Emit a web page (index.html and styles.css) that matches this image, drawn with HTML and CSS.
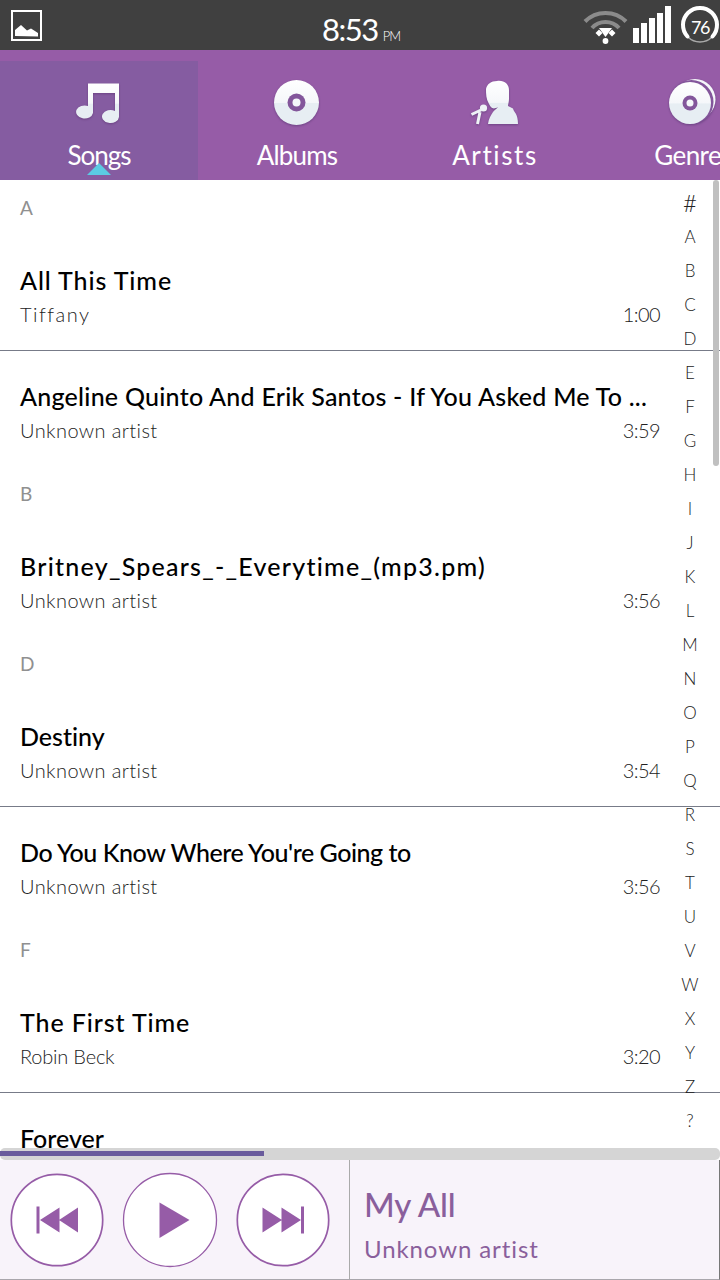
FILE: index.html
```html
<!DOCTYPE html>
<html lang="en">
<head>
<meta charset="utf-8">
<title>Music</title>
<link rel="stylesheet" href="styles.css">
</head>
<body>
<div class="screen">
  <header class="status">
    <svg class="status-photo" width="31" height="31" viewBox="0 0 31 31"><path d="M1 1h29v29H1z" fill="none" stroke="#fff" stroke-width="2"/><path d="M4 26v-6l6-5 6 5.500 4-2 7 4.500v3.500z" fill="#fff"/></svg>
    <div class="clock"><span class="clock-time">8:53</span><span class="clock-pm">PM</span></div>
    <div class="status-right">
      <svg width="46" height="38" viewBox="0 0 46 38"><g fill="none" stroke="#8b8b8b" stroke-width="4"><path d="M2 15.500C13 4 32 4 43 15.500"/><path d="M9 22C16 14 29 14 36 22"/></g><path d="M16 22h13L22.500 31z" fill="#fff"/><path d="M16 23.500l3.500 3.500-3.500 3.500-3.500-3.500zM29 23.500L25.500 27l3.500 3.500 3.500-3.500z" fill="#fff"/><circle cx="22.500" cy="35" r="2.900" fill="#fff"/></svg>
      <svg class="signal" width="38" height="37" viewBox="0 0 38 37"><path d="M0 22h6v15H0zM8 17h6v20H8zM16 12h6v25h-6zM24 7h6v30h-6zM32 0h6v37h-6z" fill="#fff"/></svg>
      <div class="battery">
        <svg width="40" height="40" viewBox="0 0 40 40"><circle cx="20" cy="20" r="17" fill="none" stroke="#aaa" stroke-width="1.500"/><path d="M7.500 31.500A17 17 0 1 1 32.500 31.500" fill="none" stroke="#fff" stroke-width="4" stroke-linecap="round"/></svg>
        <span class="battery-level">76</span>
      </div>
    </div>
  </header>

  <nav class="tabs">
    <div class="tab tab-active">
      <svg class="tab-icon" width="50" height="50" viewBox="0 0 50 50"><path d="M14 6.500h31V40a8.500 6.500 0 1 1-4-6V16H19v20a8.500 6.500 0 1 1-5-7z" fill="url(#shine)"/><defs><linearGradient id="shine" x1="0" y1="0" x2="0" y2="1"><stop offset="0" stop-color="#fff"/><stop offset=".5" stop-color="#f5f7fa"/><stop offset=".52" stop-color="#e7eef3"/><stop offset="1" stop-color="#e7eef3"/></linearGradient></defs></svg>
      <span class="tab-label label-songs">Songs</span>
    </div>
    <div class="tab">
      <svg class="tab-icon" width="50" height="50" viewBox="0 0 50 50"><circle cx="24.500" cy="25.500" r="22.500" fill="url(#shine)"/><circle cx="24.500" cy="25.500" r="9" fill="#83569b"/><circle cx="24.500" cy="25.500" r="4" fill="#f5f7fa"/></svg>
      <span class="tab-label label-albums">Albums</span>
    </div>
    <div class="tab">
      <svg class="tab-icon" width="50" height="50" viewBox="0 0 50 50"><path d="M27 4c7-1 12 3 12 9v9c0 3-1 5-1 7l5 2.500c1 4 5 5 5 15.500H18c.5-5 3-9 5-12 1-2 4-3 5-5-5 3-7 1-9-3C16 22 16 17 16 12 17 7 21 4 27 4z" fill="url(#shine)"/><circle cx="13.500" cy="31" r="3.600" fill="#eef2f6"/><path d="M11 33L1.500 37.500M10 35L7.500 47" stroke="#eef2f6" stroke-width="3" fill="none"/></svg>
      <span class="tab-label label-artists">Artists</span>
    </div>
    <div class="tab">
      <svg class="tab-icon" width="50" height="50" viewBox="0 0 50 50"><circle cx="27" cy="22.500" r="20.500" fill="#f5f7fa"/><circle cx="23.500" cy="25" r="22" fill="#83569b"/><circle cx="22" cy="26" r="21" fill="url(#shine)"/><circle cx="22" cy="26" r="7.500" fill="#83569b"/><circle cx="22" cy="26" r="3.500" fill="#f5f7fa"/></svg>
      <span class="tab-label label-genres">Genres</span>
    </div>
  </nav>

  <main class="library">
    <div class="section">A</div>
    <div class="song divided"><div class="song-title t1">All This Time</div><div class="song-meta"><span class="tiffany">Tiffany</span><span class="time">1:00</span></div></div>
    <div class="song"><div class="song-title t2">Angeline Quinto And Erik Santos - If You Asked Me To ...</div><div class="song-meta"><span>Unknown artist</span><span class="time">3:59</span></div></div>
    <div class="section">B</div>
    <div class="song"><div class="song-title t3">Britney_Spears_-_Everytime_(mp3.pm)</div><div class="song-meta"><span>Unknown artist</span><span class="time">3:56</span></div></div>
    <div class="section">D</div>
    <div class="song divided"><div class="song-title t4">Destiny</div><div class="song-meta"><span>Unknown artist</span><span class="time">3:54</span></div></div>
    <div class="song"><div class="song-title t5">Do You Know Where You're Going to</div><div class="song-meta"><span>Unknown artist</span><span class="time">3:56</span></div></div>
    <div class="section">F</div>
    <div class="song divided"><div class="song-title t6">The First Time</div><div class="song-meta"><span class="robin">Robin Beck</span><span class="time">3:20</span></div></div>
    <div class="song"><div class="song-title t7">Forever</div></div>
    <div class="alphabet">
      <span class="hash">#</span><span>A</span><span>B</span><span>C</span><span>D</span><span>E</span><span>F</span><span>G</span><span>H</span><span>I</span><span>J</span><span>K</span><span>L</span><span>M</span><span>N</span><span>O</span><span>P</span><span>Q</span><span>R</span><span>S</span><span>T</span><span>U</span><span>V</span><span>W</span><span>X</span><span>Y</span><span>Z</span><span>?</span>
    </div>
    <div class="scroll-thumb"></div>
  </main>

  <div class="progress"><div class="progress-fill"></div></div>

  <footer class="player">
    <div class="controls">
      <svg width="94" height="96" viewBox="0 0 94 96"><circle cx="47" cy="48" r="45.700" fill="#fff" stroke="#965ca7" stroke-width="1.700"/><path d="M26.500 34.500h3v27h-3zM49.500 35.500v25L30 48zM68 35.500v25L49 48z" fill="#965ca7"/></svg>
      <svg width="96" height="96" viewBox="0 0 96 96"><circle cx="48" cy="48" r="46.500" fill="#fff" stroke="#965ca7" stroke-width="1.300"/><path d="M37.500 30.500L67.500 48 37.500 66z" fill="#965ca7"/></svg>
      <svg width="94" height="96" viewBox="0 0 94 96"><circle cx="47" cy="48" r="45.700" fill="#fff" stroke="#965ca7" stroke-width="1.700"/><path d="M65 34.500h3v27h-3zM26.500 35.500v25L46 48zM45.500 35.500v25L65 48z" fill="#965ca7"/></svg>
    </div>
    <div class="now-playing">
      <div class="now-title">My All</div>
      <div class="now-artist">Unknown artist</div>
    </div>
  </footer>
</div>
</body>
</html>
```

FILE: styles.css
```css
* { box-sizing: border-box; }
body { margin: 0; font-family: Lato, "Open Sans", sans-serif; font-variant-ligatures: none; }
svg { display: block; }
.screen { width: 720px; height: 1280px; display: flex; flex-direction: column; overflow: hidden; background: #fff; }

.status { height: 50px; flex: none; display: grid; grid-template-columns: 1fr auto 1fr; align-items: start; background: #404040; color: #fff; }
.status-photo { margin: 10px 0 0 11px; }
.clock { display: flex; align-items: baseline; gap: 5px; padding: 11px 0 0 2px; }
.clock-time { font-size: 31px; line-height: 36px; letter-spacing: -1.5px; }
.clock-pm { font-size: 13px; font-weight: 300; letter-spacing: -1px; }
.status-right { display: flex; justify-content: flex-end; padding: 6px 1px 0 0; }
.signal { margin-left: 4px; }
.battery { position: relative; margin: -1px 0 0 9px; width: 39px; }
.battery-level { position: absolute; left: 0; top: 11px; width: 40px; text-align: center; font-size: 18px; line-height: 22px; letter-spacing: -1.5px; }

.tabs { height: 130px; flex: none; display: flex; padding-top: 11px; background: #965ca7; overflow: hidden; }
.tab { position: relative; width: 198px; flex: none; display: flex; flex-direction: column; align-items: center; padding-top: 16px; color: #fff; }
.tab-active { background: #855ca1; }
.tab-active::after { content: ""; position: absolute; left: 87px; bottom: 5px; border: 12px solid transparent; border-top: 0; border-bottom-color: #5bcbe3; }
.tab-icon { filter: drop-shadow(0 1px 1px #6d4384); }
.tab-label { font-size: 26px; line-height: 32px; margin-top: 12px; }
.label-songs { letter-spacing: -1px; }
.label-albums { letter-spacing: -.8px; }
.label-artists { letter-spacing: 1.600px; }
.label-genres { letter-spacing: -.6px; }

.library { position: relative; flex: 1; min-height: 0; overflow: hidden; }
.section { height: 54px; padding: 14px 20px 0; font-size: 19px; line-height: 28px; color: #909090; }
.song { height: 116px; padding: 29px 60px 0 20px; }
.divided { box-shadow: 0 1px 0 #777b88; }
.song-title { font-size: 25px; line-height: 34px; font-weight: 500; color: #000; white-space: nowrap; }
.t1, .t6 { letter-spacing: .9px; }
.t2 { letter-spacing: .25px; }
.t3 { letter-spacing: 1.250px; }
.t5 { letter-spacing: -.45px; }
.song-meta { display: flex; justify-content: space-between; font-size: 20px; line-height: 32px; margin-top: 1px; font-weight: 300; letter-spacing: .4px; color: #222; }
.tiffany { letter-spacing: 1.500px; }
.robin { letter-spacing: -.2px; }
.time { letter-spacing: -.6px; }
.alphabet { position: absolute; top: 6px; left: 670px; width: 40px; display: flex; flex-direction: column; align-items: center; font-size: 17px; line-height: 34px; font-weight: 300; color: #222; }
.hash { font-size: 24px; line-height: 33px; height: 34px; }
.scroll-thumb { position: absolute; top: 0; right: 1px; width: 6px; height: 286px; border-radius: 3px; background: #c0c0c0; }

.progress { height: 12px; flex: none; padding-top: 3px; background: #d5d5d5; border-radius: 5px; }
.progress-fill { width: 264px; height: 5px; background: #695b9c; }

.player { height: 120px; flex: none; display: flex; background: #f8f3fa; border-bottom: 1px solid #aaa6ac; border-right: 1px solid #777; }
.controls { display: flex; align-items: flex-start; gap: 18px; width: 350px; padding: 11.500px 0 0 9.500px; border-right: 1px solid #aaa; }
.now-playing { padding: 22px 0 0 14px; color: #8a5f9c; }
.now-title { font-size: 33px; line-height: 44px; font-weight: 500; letter-spacing: -.1px; }
.now-artist { font-size: 24px; line-height: 32px; margin-top: 7px; letter-spacing: .9px; }
```
